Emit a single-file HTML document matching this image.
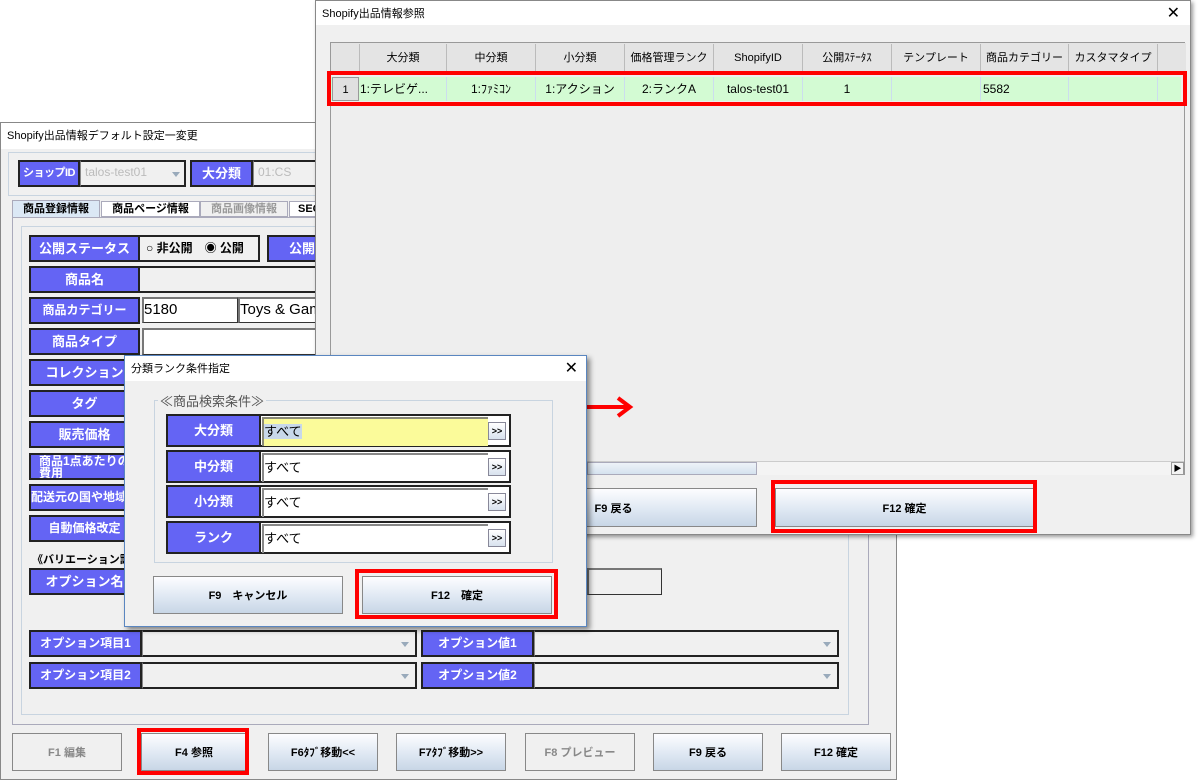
<!DOCTYPE html>
<html><head><meta charset="utf-8"><style>
*{margin:0;padding:0;box-sizing:border-box}
body{width:1200px;height:780px;background:#fff;position:relative;overflow:hidden;font-family:"Liberation Sans","Noto Sans CJK JP",sans-serif;font-size:12px;color:#000}
.a{position:absolute}
.win{background:#f0f0f0;border:1px solid #888}
.tb{background:#fff;font-size:11px;padding:4px 6px}
.lbl{position:absolute;background:#6464f4;color:#fff;font-weight:bold;text-align:center;border:2px solid #222;font-size:13px;line-height:23px;white-space:nowrap;overflow:hidden}
.inp{position:absolute;background:#fff;border:1px solid #333;border-top:2px solid #777;border-left:2px solid #777}
.ginp{position:absolute;background:#f0f0f0;border:1px solid #888}
.btn{position:absolute;border:1px solid #888;background:linear-gradient(#fdfdff,#dfe8f3 55%,#c8d6e6);font-weight:bold;font-size:11px;text-align:center;display:flex;align-items:center;justify-content:center}
.dis{color:#888;background:#f0f0f0}
.red{position:absolute;border:4px solid #f00}
.th{position:absolute;top:0;height:28px;border-right:1px solid #bbb;text-align:center;line-height:28px;font-size:11px;background:#e4e4e4}
.td{position:absolute;top:0;height:24px;line-height:24px;font-size:12px;text-align:center;border-right:1px solid #cde}
.dd{position:absolute;right:2px;top:4px;width:0;height:0;border-left:4px solid transparent;border-right:4px solid transparent;border-top:5px solid #9ab}
.gg{position:absolute;right:3px;top:6px;width:18px;height:18px;border:1px solid #889;background:linear-gradient(#fff,#d8e2ee);font-size:9px;font-weight:bold;text-align:center;line-height:16px}
</style></head><body>

<div class="a win" style="left:0;top:122px;width:897px;height:658px">
 <div class="tb" style="height:26px;font-size:11px">Shopify出品情報デフォルト設定一変更</div>
</div>
<div class="a" style="left:8px;top:152px;width:330px;height:44px;border:1px solid #c8d4e0"></div>
<div class="lbl" style="left:18px;top:160px;width:62px;height:27px;font-size:11px;letter-spacing:-0.5px">ショップID</div>
<div class="ginp" style="left:80px;top:160px;width:106px;height:27px;color:#bbb;padding:3px 4px;border:2px solid #222;border-left:1px solid #888">talos-test01<span class="dd" style="top:10px;right:4px"></span></div>
<div class="lbl" style="left:190px;top:160px;width:63px;height:27px">大分類</div>
<div class="ginp" style="left:253px;top:160px;width:80px;height:27px;color:#bbb;padding:3px 4px;border:2px solid #222;border-left:1px solid #888">01:CS</div>
<div class="a" style="left:12px;top:200px;width:88px;height:18px;background:#dbe8f5;border:1px solid #aab;font-size:11px;font-weight:bold;text-align:center;line-height:16px">商品登録情報</div>
<div class="a" style="left:101px;top:201px;width:99px;height:16px;background:#fff;border:1px solid #aab;font-size:11px;font-weight:bold;text-align:center;line-height:14px">商品ページ情報</div>
<div class="a" style="left:200px;top:201px;width:88px;height:16px;background:#f0f0f0;border:1px solid #aab;font-size:11px;font-weight:bold;color:#999;text-align:center;line-height:14px">商品画像情報</div>
<div class="a" style="left:289px;top:201px;width:40px;height:16px;background:#fff;border:1px solid #aab;font-size:11px;font-weight:bold;padding-left:8px;line-height:14px">SEO</div>
<div class="a" style="left:12px;top:217px;width:857px;height:508px;border:1px solid #aab;background:#f0f0f0"></div>
<div class="a" style="left:21px;top:226px;width:828px;height:489px;border:1px solid #c8d4e0"></div>

<div class="lbl" style="left:29px;top:235px;width:111px;height:27px">公開ステータス</div>
<div class="ginp" style="left:140px;top:235px;width:120px;height:27px;border:2px solid #222;border-left:none;font-size:12px;line-height:23px;padding-left:6px;font-weight:bold">○ 非公開　◉ 公開</div>
<div class="lbl" style="left:267px;top:235px;width:70px;height:27px">公開</div>
<div class="lbl" style="left:29px;top:266px;width:111px;height:27px">商品名</div>
<div class="ginp" style="left:140px;top:266px;width:200px;height:27px;border:2px solid #222;border-left:none"></div>
<div class="lbl" style="left:29px;top:297px;width:111px;height:27px;font-size:12px">商品カテゴリー</div>
<div class="inp" style="left:142px;top:297px;width:96px;height:26px;font-size:15px;line-height:22px">5180</div>
<div class="inp" style="left:238px;top:297px;width:100px;height:26px;font-size:15px;line-height:22px;white-space:nowrap;overflow:hidden">Toys &amp; Gam</div>
<div class="lbl" style="left:29px;top:328px;width:111px;height:27px">商品タイプ</div>
<div class="inp" style="left:142px;top:328px;width:196px;height:27px"></div>
<div class="lbl" style="left:29px;top:359px;width:111px;height:27px">コレクション</div>
<div class="lbl" style="left:29px;top:390px;width:111px;height:27px">タグ</div>
<div class="lbl" style="left:29px;top:421px;width:111px;height:27px">販売価格</div>
<div class="lbl" style="left:29px;top:453px;width:111px;height:27px;line-height:12px;font-size:12px;text-align:left;padding-left:8px">商品1点あたりの<br>費用</div>
<div class="lbl" style="left:29px;top:484px;width:111px;height:27px;font-size:12px;text-align:left">配送元の国や地域</div>
<div class="lbl" style="left:29px;top:515px;width:111px;height:27px;font-size:12px">自動価格改定</div>
<div class="a" style="left:32px;top:551px;font-size:11px;font-weight:bold">《バリエーション設定》</div>
<div class="lbl" style="left:29px;top:568px;width:111px;height:27px">オプション名</div>
<div class="inp" style="left:587px;top:568px;width:75px;height:27px;background:#f0f0f0"></div>

<div class="lbl" style="left:29px;top:630px;width:113px;height:27px;font-size:12px">オプション項目1</div>
<div class="ginp" style="left:142px;top:630px;width:275px;height:27px;border:2px solid #222;border-left:1px solid #888"><span class="dd" style="top:10px;right:6px"></span></div>
<div class="lbl" style="left:421px;top:630px;width:113px;height:27px;font-size:12px">オプション値1</div>
<div class="ginp" style="left:534px;top:630px;width:305px;height:27px;border:2px solid #222;border-left:1px solid #888"><span class="dd" style="top:10px;right:6px"></span></div>
<div class="lbl" style="left:29px;top:662px;width:113px;height:27px;font-size:12px">オプション項目2</div>
<div class="ginp" style="left:142px;top:662px;width:275px;height:27px;border:2px solid #222;border-left:1px solid #888"><span class="dd" style="top:10px;right:6px"></span></div>
<div class="lbl" style="left:421px;top:662px;width:113px;height:27px;font-size:12px">オプション値2</div>
<div class="ginp" style="left:534px;top:662px;width:305px;height:27px;border:2px solid #222;border-left:1px solid #888"><span class="dd" style="top:10px;right:6px"></span></div>

<div class="btn dis" style="left:12px;top:733px;width:110px;height:38px">F1 編集</div>
<div class="btn" style="left:141px;top:733px;width:106px;height:38px">F4 参照</div>
<div class="btn" style="left:268px;top:733px;width:110px;height:38px">F6ﾀﾌﾞ移動&lt;&lt;</div>
<div class="btn" style="left:396px;top:733px;width:110px;height:38px">F7ﾀﾌﾞ移動&gt;&gt;</div>
<div class="btn dis" style="left:525px;top:733px;width:110px;height:38px">F8 プレビュー</div>
<div class="btn" style="left:653px;top:733px;width:110px;height:38px">F9 戻る</div>
<div class="btn" style="left:781px;top:733px;width:110px;height:38px">F12 確定</div>
<div class="red" style="left:137px;top:728px;width:112px;height:47px"></div>

<div class="a win" style="left:315px;top:0;width:876px;height:535px;box-shadow:2px 2px 4px rgba(0,0,0,.4)">
 <div class="tb" style="height:24px">Shopify出品情報参照<span style="position:absolute;right:10px;top:2px;font-size:16px;font-weight:normal">✕</span></div>
</div>
<div class="a" style="left:330px;top:42px;width:855px;height:433px;background:#eee;border:1px solid #999">
 <div class="a" style="left:0;top:0;width:855px;height:30px;background:#e4e4e4"></div>
 <div class="th" style="left:0;width:29px;top:1px"></div>
 <div class="th" style="left:29px;width:87px;top:1px">大分類</div>
 <div class="th" style="left:116px;width:89px;top:1px">中分類</div>
 <div class="th" style="left:205px;width:89px;top:1px">小分類</div>
 <div class="th" style="left:294px;width:89px;top:1px">価格管理ランク</div>
 <div class="th" style="left:383px;width:89px;top:1px">ShopifyID</div>
 <div class="th" style="left:472px;width:89px;top:1px">公開ｽﾃｰﾀｽ</div>
 <div class="th" style="left:561px;width:89px;top:1px">テンプレート</div>
 <div class="th" style="left:650px;width:88px;top:1px">商品カテゴリー</div>
 <div class="th" style="left:738px;width:89px;top:1px">カスタマタイプ</div>
 <div class="a" style="left:0;top:34px;width:850px;height:24px;background:#d3fbd3">
  <div class="td" style="left:1px;width:27px;background:#e0e0e0;border:1px solid #999;font-size:11px">1</div>
  <div class="td" style="left:29px;width:87px;text-align:left">1:テレビゲ...</div>
  <div class="td" style="left:116px;width:89px">1:ﾌｧﾐｺﾝ</div>
  <div class="td" style="left:205px;width:89px">1:アクション</div>
  <div class="td" style="left:294px;width:89px">2:ランクA</div>
  <div class="td" style="left:383px;width:89px">talos-test01</div>
  <div class="td" style="left:472px;width:89px">1</div>
  <div class="td" style="left:561px;width:89px"></div>
  <div class="td" style="left:650px;width:88px;text-align:left;padding-left:2px">5582</div>
  <div class="td" style="left:738px;width:89px"></div>
 </div>
 <div class="a" style="left:0;top:418px;width:853px;height:14px;background:#f4f4f4;border-top:1px solid #ccc">
  <div class="a" style="left:256px;top:0;width:170px;height:13px;background:linear-gradient(#eef3f8,#d5e2ef);border:1px solid #aab"></div>
  <div class="a" style="right:0;top:0;width:13px;height:13px;border:1px solid #999;font-size:8px;text-align:center;line-height:11px">▶</div>
 </div>
</div>
<div class="red" style="left:327px;top:71px;width:860px;height:35px"></div>
<div class="btn" style="left:470px;top:488px;width:287px;height:39px">F9 戻る</div>
<div class="btn" style="left:775px;top:488px;width:259px;height:39px">F12 確定</div>
<div class="red" style="left:771px;top:480px;width:266px;height:53px"></div>

<svg class="a" style="left:562px;top:396px" width="74" height="24"><path d="M3 11H66" stroke="#f00" stroke-width="4"/><path d="M56 2L68 11L56 20" fill="none" stroke="#f00" stroke-width="4"/></svg>

<div class="a win" style="left:124px;top:355px;width:463px;height:272px;border:1px solid #5a86c0;box-shadow:3px 3px 5px rgba(0,0,0,.45)">
 <div class="tb" style="height:25px">分類ランク条件指定<span style="position:absolute;right:8px;top:2px;font-size:16px">✕</span></div>
</div>
<div class="a" style="left:154px;top:400px;width:399px;height:163px;border:1px solid #c8d4e0"></div>
<div class="a" style="left:158px;top:391px;background:#f0f0f0;font-size:13px;color:#555;padding:0 2px">≪商品検索条件≫</div>
<div class="a" style="left:166px;top:414px;width:345px;height:33px;border:2px solid #222;background:#fff">
 <div class="lbl" style="left:-2px;top:-2px;width:95px;height:33px;line-height:29px;border-right:2px solid #222">大分類</div>
 <div class="a" style="left:94px;top:1px;width:226px;height:29px;background:#fbfb9a;border-top:2px solid #887;border-left:2px solid #887;font-size:13px;line-height:26px"><span style="background:#c8d8ea">すべて</span></div>
 <div class="gg">&gt;&gt;</div>
</div>
<div class="a" style="left:166px;top:450px;width:345px;height:33px;border:2px solid #222;background:#fff">
 <div class="lbl" style="left:-2px;top:-2px;width:95px;height:33px;line-height:29px">中分類</div>
 <div class="a" style="left:94px;top:1px;width:226px;height:29px;border-top:2px solid #888;border-left:2px solid #888;font-size:13px;line-height:26px">すべて</div>
 <div class="gg">&gt;&gt;</div>
</div>
<div class="a" style="left:166px;top:485px;width:345px;height:33px;border:2px solid #222;background:#fff">
 <div class="lbl" style="left:-2px;top:-2px;width:95px;height:33px;line-height:29px">小分類</div>
 <div class="a" style="left:94px;top:1px;width:226px;height:29px;border-top:2px solid #888;border-left:2px solid #888;font-size:13px;line-height:26px">すべて</div>
 <div class="gg">&gt;&gt;</div>
</div>
<div class="a" style="left:166px;top:521px;width:345px;height:33px;border:2px solid #222;background:#fff">
 <div class="lbl" style="left:-2px;top:-2px;width:95px;height:33px;line-height:29px">ランク</div>
 <div class="a" style="left:94px;top:1px;width:226px;height:29px;border-top:2px solid #888;border-left:2px solid #888;font-size:13px;line-height:26px">すべて</div>
 <div class="gg">&gt;&gt;</div>
</div>
<div class="btn" style="left:153px;top:576px;width:190px;height:38px">F9　キャンセル</div>
<div class="btn" style="left:362px;top:576px;width:190px;height:38px">F12　確定</div>
<div class="red" style="left:355px;top:569px;width:203px;height:50px"></div>
</body></html>
